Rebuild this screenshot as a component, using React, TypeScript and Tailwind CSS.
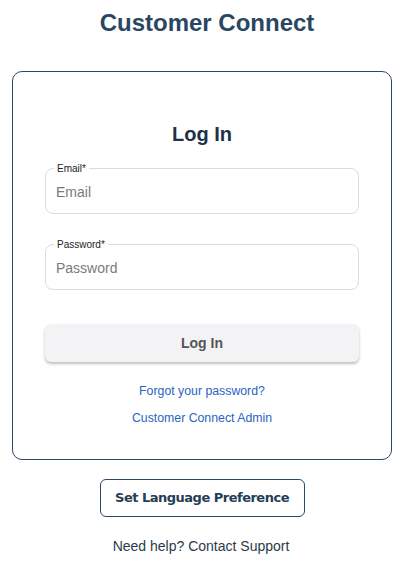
import { useState } from 'react';

const font = { fontFamily: '"Liberation Sans", Arial, sans-serif' };

interface FieldProps {
  label: string;
  type: string;
  value: string;
  onChange: (v: string) => void;
}

const OutlinedField = ({ label, type, value, onChange }: FieldProps) => (
  <div className="relative h-[46px] rounded-[8px] border border-[#dcdcdc]">
    <span className="absolute left-[8px] top-0 -translate-y-1/2 bg-white px-[3px] text-[10px] leading-[12px] text-[#222]">
      {label}*
    </span>
    <input
      type={type}
      value={value}
      placeholder={label}
      onChange={(e) => onChange(e.target.value)}
      className="h-full w-full rounded-[8px] bg-transparent px-[10px] pt-[2px] text-[14px] text-[#333] placeholder:text-[#7a7a7a] outline-none"
    />
  </div>
);

export default function App() {
  const [email, setEmail] = useState('');
  const [password, setPassword] = useState('');

  return (
    <div className="flex min-h-[562px] w-full flex-col items-center bg-white pt-[8px]" style={font}>
      <h1 className="pl-[12px] text-[24px] font-bold leading-[29px] text-[#2a4662]">Customer Connect</h1>

      <div className="mt-[34px] ml-[12px] flex w-[380px] flex-col self-start rounded-[10px] border border-[#2c4868] px-8 pb-[32px] pt-[50px]">
        <h2 className="text-center text-[20px] font-bold leading-[24px] text-[#1f3147]">Log In</h2>

        <div className="mt-[22px] flex flex-col gap-[30px]">
          <OutlinedField label="Email" type="email" value={email} onChange={setEmail} />
          <OutlinedField label="Password" type="password" value={password} onChange={setPassword} />
        </div>

        <button
          type="button"
          className="mt-[34px] h-[38px] w-full rounded-[6px] bg-[#f3f3f5] text-[14px] font-bold text-[#555] shadow-[0_2px_3px_rgba(0,0,0,0.25)]"
        >
          Log In
        </button>

        <div className="mt-[20px] flex flex-col items-center gap-[9px] text-[12.3px] leading-[18px] text-[#2a64c2]">
          <a href="#">Forgot your password?</a>
          <a href="#">Customer Connect Admin</a>
        </div>
      </div>

      <button
        type="button"
        className="mt-[19px] ml-[2px] h-[38px] w-[205px] rounded-[6px] border border-[#2c4868] text-[13px] font-bold tracking-[-0.5px] text-[#253d56]"
        style={{ fontFamily: '"DejaVu Sans", Verdana, sans-serif' }}
      >
        Set Language Preference
      </button>

      <p className="mt-[19px] text-[14px] leading-[20px] text-[#2a3a4c]">Need help? Contact Support</p>
    </div>
  );
}
